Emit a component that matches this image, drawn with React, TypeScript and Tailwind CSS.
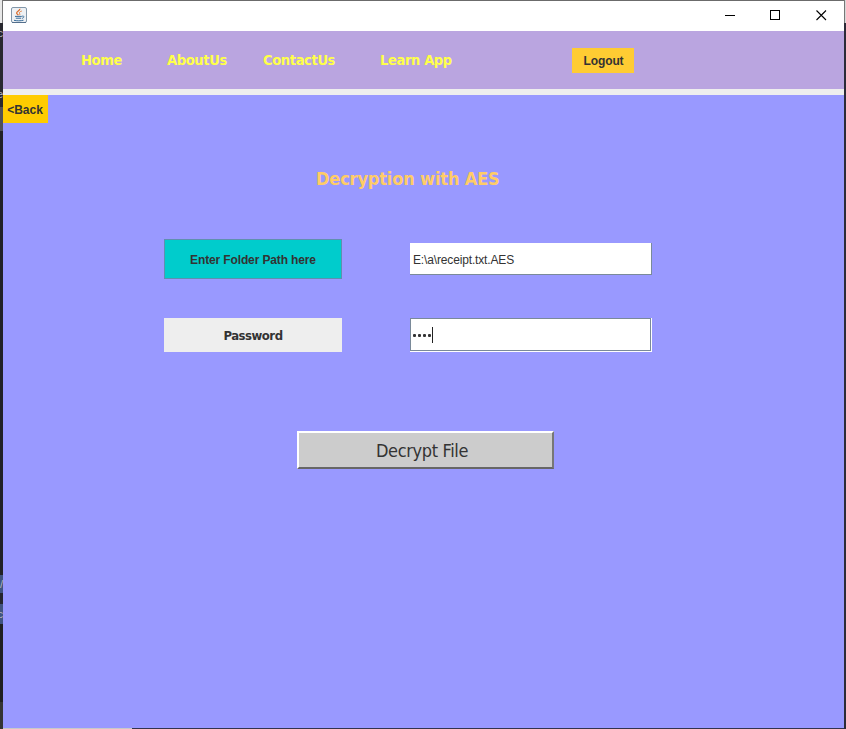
import React from "react";

const tahoma = "font-['DejaVu_Sans_Condensed','DejaVu_Sans',sans-serif]";
const arial = "font-['Liberation_Sans',Arial,sans-serif]";

function JavaIcon() {
  return (
    <svg width="16" height="16" viewBox="0 0 16 16" fill="none">
      <rect x="0.5" y="0.5" width="15" height="15" rx="1.5" fill="#eef1f4" stroke="#8297aa" />
      <path d="M1 15.5H15" stroke="#536f8c" />
      <path d="M8.8 1.8C9.6 3.6 5.2 4.4 5.6 6.2C5.8 7 6.8 7.4 7.3 8.2" stroke="#d96b2b" strokeWidth="1.2" />
      <path d="M10.8 4C8.6 4.8 7.8 5.6 8.6 6.6C9 7.2 8.8 7.8 8.4 8.2" stroke="#e07c3c" />
      <path d="M4 9.4H10.8M4.8 11.2H10.2M3 13.3C5.5 14 10 14 12.5 13.2" stroke="#376b99" />
      <path d="M11 9.2C13.8 8.6 13.4 10.8 11 11.4" stroke="#376b99" strokeWidth="0.9" />
    </svg>
  );
}

function TitleBar() {
  return (
    <header className="flex h-[30px] shrink-0 items-start justify-between bg-white">
      <div className="pt-[6px] pl-2">
        <JavaIcon />
      </div>
      <div className="flex pt-[9px] pr-[17px]">
        <svg width="102" height="11" viewBox="0 0 102 11" fill="none" stroke="#000">
          <path d="M0 5.5H10" shapeRendering="crispEdges" />
          <rect x="45.5" y="0.5" width="9" height="9" shapeRendering="crispEdges" />
          <path d="M91.5 0.5L101 10M101 0.5L91.5 10" strokeWidth="1.1" />
        </svg>
      </div>
    </header>
  );
}

function NavItem({ label, className }: { label: string; className: string }) {
  return (
    <a className={`shrink-0 whitespace-nowrap text-[14.5px] leading-[18px] font-bold tracking-[-0.35px] text-[#ffff4a] ${tahoma} ${className}`}>
      {label}
    </a>
  );
}

function NavBar() {
  return (
    <nav className="flex h-[58px] shrink-0 items-center bg-[#baa5e0] pl-[78px]">
      <NavItem label="Home" className="w-[86px]" />
      <NavItem label="AboutUs" className="w-[96px]" />
      <NavItem label="ContactUs" className="w-[117px]" />
      <NavItem label="Learn App" className="w-[192px]" />
      <button className={`h-[25px] w-[62px] bg-[#ffcc33] pt-px pl-px text-[12px] font-bold tracking-[-0.1px] text-[#333] ${arial}`}>Logout</button>
    </nav>
  );
}

function DesktopEdge() {
  return (
    <div className={`flex w-[3px] shrink-0 flex-col overflow-hidden bg-[#28282c] text-[11px] text-[#b5b5bd] ${arial}`}>
      <div className="h-[23px] border-r border-[#777] bg-[#e8e8e8]" />
      <div className="flex h-[66px] items-start justify-end bg-[#28282f] pt-[5px] leading-[11px]">c</div>
      <div className="flex h-[18px] items-start justify-end bg-[#28282f] leading-[11px]">e</div>
      <div className="h-[24px] bg-[#505057]" />
      <div className="h-[444px] bg-[#222226]" />
      <div className="flex h-[18px] items-center bg-[#405481]">/</div>
      <div className="h-[11px] bg-[#25262e]" />
      <div className="flex h-[20px] items-center justify-end bg-[#405481]">c</div>
      <div className="h-[78px] bg-[#202020]" />
      <div className="grow bg-[#343434]" />
    </div>
  );
}

export default function App() {
  return (
    <div className="flex h-[729px] w-[846px] overflow-hidden">
      <DesktopEdge />
      <div className="flex w-[841px] shrink-0 flex-col border-t border-[#6b6b6b]">
        <TitleBar />
        <NavBar />
        <div className="h-[6px] shrink-0 bg-[#eeeeee]" />
        <main className="flex h-[633px] shrink-0 flex-col items-start bg-[#9999ff] text-[#333]">
          <button className={`h-[28px] w-[45px] bg-[#ffcc00] pt-px pr-px text-[12px] font-bold ${arial}`}>&lt;Back</button>
          <h1 className={`mt-[44px] ml-[313px] h-[24px] whitespace-nowrap text-[18px] leading-[24px] font-bold tracking-[-0.15px] text-[#ffcc66] ${tahoma}`}>
            Decryption with AES
          </h1>
          <section className="mt-[48px] ml-[161px] flex items-start gap-[68px]">
            <button className={`h-[40px] w-[178px] border border-[#5f8fae] bg-[#00cccc] pt-px text-[12px] font-bold tracking-[-0.13px] ${arial}`}>
              Enter Folder Path here
            </button>
            <div className={`mt-[4px] flex h-[32px] w-[242px] items-center border-r border-b border-[#7a8a99] bg-white pt-[2px] pl-[3px] text-[12px] tracking-[-0.15px] ${arial}`}>
              E:\a\receipt.txt.AES
            </div>
          </section>
          <section className="mt-[39px] ml-[161px] flex items-start gap-[68px]">
            <div className={`flex h-[34px] w-[178px] items-center justify-center bg-[#eeeeee] pt-px text-[13px] font-bold tracking-[-0.5px] ${tahoma}`}>
              Password
            </div>
            <div className="h-[34px] w-[242px] border-r border-b border-white">
              <div className="flex h-full items-center border border-[#7a8a99] bg-white pl-[2px]">
                <div className="flex gap-[2px] pt-[2px] pr-px">
                  <i className="size-[3px] rounded-[1px] bg-[#333]" />
                  <i className="size-[3px] rounded-[1px] bg-[#333]" />
                  <i className="size-[3px] rounded-[1px] bg-[#333]" />
                  <i className="size-[3px] rounded-[1px] bg-[#333]" />
                </div>
                <div className="h-[16px] w-px bg-[#222]" />
              </div>
            </div>
          </section>
          <button className="mt-[79px] ml-[294px] h-[38px] w-[257px] border-2 border-t-white border-r-[#777] border-b-[#666] border-l-white bg-[#cccccc] pr-[7px]">
            <span className={`text-[18px] tracking-[-0.35px] whitespace-nowrap ${tahoma}`}>Decrypt File</span>
          </button>
        </main>
        <div className="flex h-px shrink-0 bg-[#33334d]">
          <div className="w-[129px] bg-[#c9c9c9]" />
        </div>
      </div>
      <div className="flex w-[2px] shrink-0 flex-col bg-[#2c2b38]">
        <div className="h-[23px] border-l border-[#777] bg-[#d8d8d8]" />
      </div>
    </div>
  );
}
